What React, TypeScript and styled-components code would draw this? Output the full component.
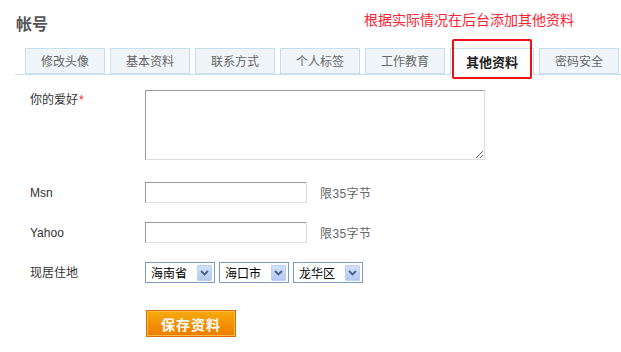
import styled, { createGlobalStyle } from "styled-components";

const GlobalStyle = createGlobalStyle`
  html, body {
    margin: 0;
    padding: 0;
    background: #fff;
  }
  body {
    font-family: "Liberation Sans", "Noto Sans CJK SC", sans-serif;
    font-size: 12px;
    color: #333;
  }
`;

const Page = styled.div`
  width: 621px;
  height: 352px;
  overflow: hidden;
`;

const Header = styled.div`
  display: flex;
  justify-content: space-between;
  align-items: flex-start;
  height: 48px;
  padding: 0 47px 0 16px;
`;

const Title = styled.h2`
  margin: 16px 0 0;
  font-size: 16px;
  line-height: 18px;
  font-weight: bold;
  color: #555;
`;

const Note = styled.div`
  margin-top: 11px;
  font-family: "Noto Sans CJK SC", sans-serif;
  font-size: 14px;
  line-height: 17px;
  color: #f23;
`;

const TabBar = styled.ul`
  display: flex;
  gap: 5px;
  height: 26px;
  margin: 0 0 0 15px;
  padding: 0 0 0 10px;
  list-style: none;
  border-bottom: 1px solid #c6dfee;
`;

const Tab = styled.li<{ $active?: boolean }>`
  position: relative;
  box-sizing: border-box;
  width: ${(p) => (p.$active ? 84 : 80)}px;
  height: ${(p) => (p.$active ? 27 : 26)}px;
  display: flex;
  align-items: center;
  justify-content: center;
  border: 1px solid #c6dfee;
  border-bottom: ${(p) => (p.$active ? "none" : "1px solid #c6dfee")};
  background: ${(p) => (p.$active ? "#fff" : "#eff5f9")};
  color: ${(p) => (p.$active ? "#222" : "#666")};
  font-weight: ${(p) => (p.$active ? "bold" : "normal")};
  font-size: ${(p) => (p.$active ? 13 : 12)}px;
  line-height: 14px;
  padding-top: 1px;

  ${(p) =>
    p.$active &&
    `
    &::after {
      content: "";
      position: absolute;
      top: -10px;
      left: 1px;
      width: 80px;
      height: 40px;
      box-sizing: border-box;
      border: 2px solid #ee1111;
      border-radius: 2px;
    }
  `}
`;

const Form = styled.div`
  display: flex;
  flex-direction: column;
  gap: 19px;
  padding: 15px 0 0 30px;
`;

const Row = styled.div<{ $top?: boolean }>`
  display: grid;
  grid-template-columns: 115px auto;
  align-items: ${(p) => (p.$top ? "start" : "center")};
  margin-bottom: ${(p) => (p.$top ? 3 : 0)}px;
`;

const Label = styled.div<{ $top?: boolean }>`
  padding-top: ${(p) => (p.$top ? 2 : 0)}px;
  font-size: 12px;
  line-height: 16px;
  color: #333;
`;

const Star = styled.span`
  color: #f22;
  margin-left: 1px;
`;

const Control = styled.div`
  display: flex;
  align-items: center;
`;

const TextArea = styled.textarea`
  box-sizing: border-box;
  width: 340px;
  height: 70px;
  margin: 0;
  border: 1px solid;
  border-color: #999 #ddd #ddd #999;
  outline: none;
  font: inherit;
`;

const Input = styled.input`
  box-sizing: border-box;
  width: 162px;
  height: 21px;
  margin: 0;
  border: 1px solid;
  border-color: #999 #ddd #ddd #999;
  outline: none;
  font: inherit;
`;

const Hint = styled.span`
  margin-left: 13px;
  color: #666;
  font-size: 12px;
  letter-spacing: 0.4px;
`;

const Selects = styled.div`
  display: flex;
  gap: 4px;
`;

const Select = styled.div`
  box-sizing: border-box;
  width: 70px;
  height: 21px;
  display: flex;
  align-items: center;
  justify-content: space-between;
  padding: 0 2px 0 5px;
  border: 1px solid #7f9db9;
  color: #000;
  font-family: "Noto Sans CJK SC", sans-serif;
  font-size: 12px;
  line-height: 14px;
`;

const Arrow = styled.span`
  box-sizing: border-box;
  width: 15px;
  height: 16px;
  display: flex;
  align-items: center;
  justify-content: center;
  border: 1px solid #bcd0f4;
  border-radius: 1px;
  background: linear-gradient(#d2e0fb, #b4c9f3);
`;

const Button = styled.button`
  box-sizing: border-box;
  width: 90px;
  height: 27px;
  margin: 8px 0 0 116px;
  padding: 0;
  border: 1px solid #dc6a00;
  box-shadow: inset 0 0 0 1px #fbbd4a;
  background: linear-gradient(#f6ab0e, #ee7b00);
  color: #fff;
  font-family: "Noto Sans CJK SC", sans-serif;
  font-weight: bold;
  font-size: 14px;
  letter-spacing: 1px;
  line-height: 16px;
  cursor: pointer;
`;

const tabs = ["修改头像", "基本资料", "联系方式", "个人标签", "工作教育", "其他资料", "密码安全"];
const places = ["海南省", "海口市", "龙华区"];

const Chevron = () => (
  <svg width="9" height="6" viewBox="0 0 9 6">
    <path d="M1 1 L4.5 4.5 L8 1" fill="none" stroke="#4d6185" strokeWidth="1.8" />
  </svg>
);

export default function App() {
  return (
    <Page>
      <GlobalStyle />
      <Header>
        <Title>帐号</Title>
        <Note>根据实际情况在后台添加其他资料</Note>
      </Header>
      <TabBar>
        {tabs.map((t) => (
          <Tab key={t} $active={t === "其他资料"}>
            {t}
          </Tab>
        ))}
      </TabBar>
      <Form>
        <Row $top>
          <Label $top>
            你的爱好<Star>*</Star>
          </Label>
          <TextArea />
        </Row>
        <Row>
          <Label>Msn</Label>
          <Control>
            <Input />
            <Hint>限35字节</Hint>
          </Control>
        </Row>
        <Row>
          <Label>Yahoo</Label>
          <Control>
            <Input />
            <Hint>限35字节</Hint>
          </Control>
        </Row>
        <Row>
          <Label>现居住地</Label>
          <Selects>
            {places.map((p) => (
              <Select key={p}>
                {p}
                <Arrow>
                  <Chevron />
                </Arrow>
              </Select>
            ))}
          </Selects>
        </Row>
        <Button>保存资料</Button>
      </Form>
    </Page>
  );
}
